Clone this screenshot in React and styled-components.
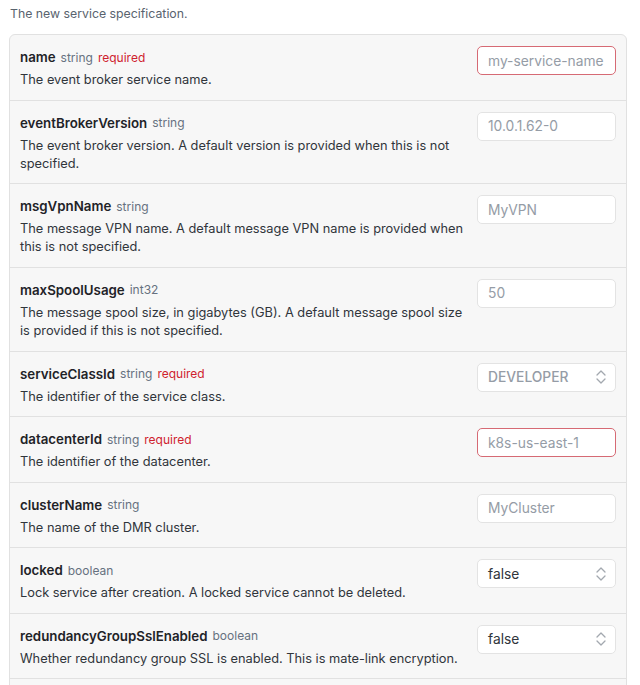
import React from 'react';
import styled, { createGlobalStyle } from 'styled-components';

const Global = createGlobalStyle`
  body {
    margin: 0;
    background: #fff;
    font-family: Inter, "Liberation Sans", Arial, sans-serif;
    color: #1f2328;
  }
`

const Page = styled.div`
  padding: 5px 13px 0 9px;
`

const Intro = styled.p`
  margin: 0 0 11px 1px;
  font-size: 12.3px;
  line-height: 18px;
  color: #59636e;
`

const Panel = styled.div`
  border: 1px solid #e1e1e1;
  border-radius: 6px;
  background: #f7f7f7;
  overflow: hidden;
`

const Row = styled.div`
  display: flex;
  align-items: flex-start;
  gap: 10px;
  padding: 12px 10px 10.3px 10px;
  border-top: ${p => (p.first ? 'none' : '1px solid #e1e1e1')};
`

const Info = styled.div`
  flex: 1;
  min-width: 0;
`

const Title = styled.div`
  display: flex;
  align-items: center;
  gap: 5px;
  height: 20px;
  line-height: 20px;
  margin-bottom: 4px;
  white-space: nowrap;
`

const Name = styled.span`
  font-size: 13.3px;
  font-weight: 600;
  color: #1f2328;
`

const Type = styled.span`
  font-size: 12px;
  color: #667180;
  padding-top: 1px;
`

const Required = styled.span`
  font-size: 12px;
  color: #cf222e;
  padding-top: 1px;
`

const Desc = styled.div`
  font-size: 12.8px;
  line-height: 18.2px;
  color: #30353b;
`

const Field = styled.div`
  width: 139px;
  flex: none;
  margin-top: -1px;
`

const Input = styled.input`
  box-sizing: border-box;
  width: 100%;
  height: 29px;
  padding: 0 10px;
  border: 1px solid ${p => (p.invalid ? '#d66a74' : '#e3e3e3')};
  border-radius: 5px;
  background: #fff;
  font-family: inherit;
  font-size: 13.8px;
  color: #1f2328;
  outline: none;
  &::placeholder {
    color: #959ca6;
  }
`

const SelectBox = styled.div`
  box-sizing: border-box;
  display: flex;
  align-items: center;
  justify-content: space-between;
  height: 29px;
  padding: 0 8px 0 10px;
  border: 1px solid #e3e3e3;
  border-radius: 5px;
  background: #fff;
  font-size: 13.8px;
  font-weight: ${p => (p.muted ? 500 : 400)};
  color: ${p => (p.muted ? '#959ca6' : '#30353b')};
  text-transform: ${p => (p.muted ? 'uppercase' : 'none')};
`

const Chevrons = () => (
  <svg width="12" height="18" viewBox="0 0 12 18" fill="none" stroke="#a3a8af" strokeWidth="1.3" strokeLinecap="round" strokeLinejoin="round">
    <path d="M2 7 L6 3 L10 7" />
    <path d="M2 11 L6 15 L10 11" />
  </svg>
)

const fields = [
  { name: 'name', type: 'string', required: true, desc: 'The event broker service name.', placeholder: 'my-service-name' },
  { name: 'eventBrokerVersion', type: 'string', desc: 'The event broker version. A default version is provided when this is not specified.', placeholder: '10.0.1.62-0' },
  { name: 'msgVpnName', type: 'string', desc: 'The message VPN name. A default message VPN name is provided when this is not specified.', placeholder: 'MyVPN' },
  { name: 'maxSpoolUsage', type: 'int32', desc: 'The message spool size, in gigabytes (GB). A default message spool size is provided if this is not specified.', placeholder: '50' },
  { name: 'serviceClassId', type: 'string', required: true, desc: 'The identifier of the service class.', select: 'DEVELOPER', muted: true },
  { name: 'datacenterId', type: 'string', required: true, desc: 'The identifier of the datacenter.', placeholder: 'k8s-us-east-1' },
  { name: 'clusterName', type: 'string', desc: 'The name of the DMR cluster.', placeholder: 'MyCluster' },
  { name: 'locked', type: 'boolean', desc: 'Lock service after creation. A locked service cannot be deleted.', select: 'false' },
  { name: 'redundancyGroupSslEnabled', type: 'boolean', desc: 'Whether redundancy group SSL is enabled. This is mate-link encryption.', select: 'false' },
  { name: 'customRouterName', type: 'string', desc: 'The unique prefix for the name of the router.', placeholder: 'myrouter' },
]

export default function App() {
  return (
    <Page>
      <Global />
      <Intro>The new service specification.</Intro>
      <Panel>
        {fields.map((f, i) => (
          <Row key={f.name} first={i === 0}>
            <Info>
              <Title>
                <Name>{f.name}</Name>
                <Type>{f.type}</Type>
                {f.required && <Required>required</Required>}
              </Title>
              <Desc>{f.desc}</Desc>
            </Info>
            <Field>
              {f.select ? (
                <SelectBox muted={f.muted}>
                  <span>{f.select}</span>
                  <Chevrons />
                </SelectBox>
              ) : (
                <Input placeholder={f.placeholder} invalid={f.required} />
              )}
            </Field>
          </Row>
        ))}
      </Panel>
    </Page>
  );
}
